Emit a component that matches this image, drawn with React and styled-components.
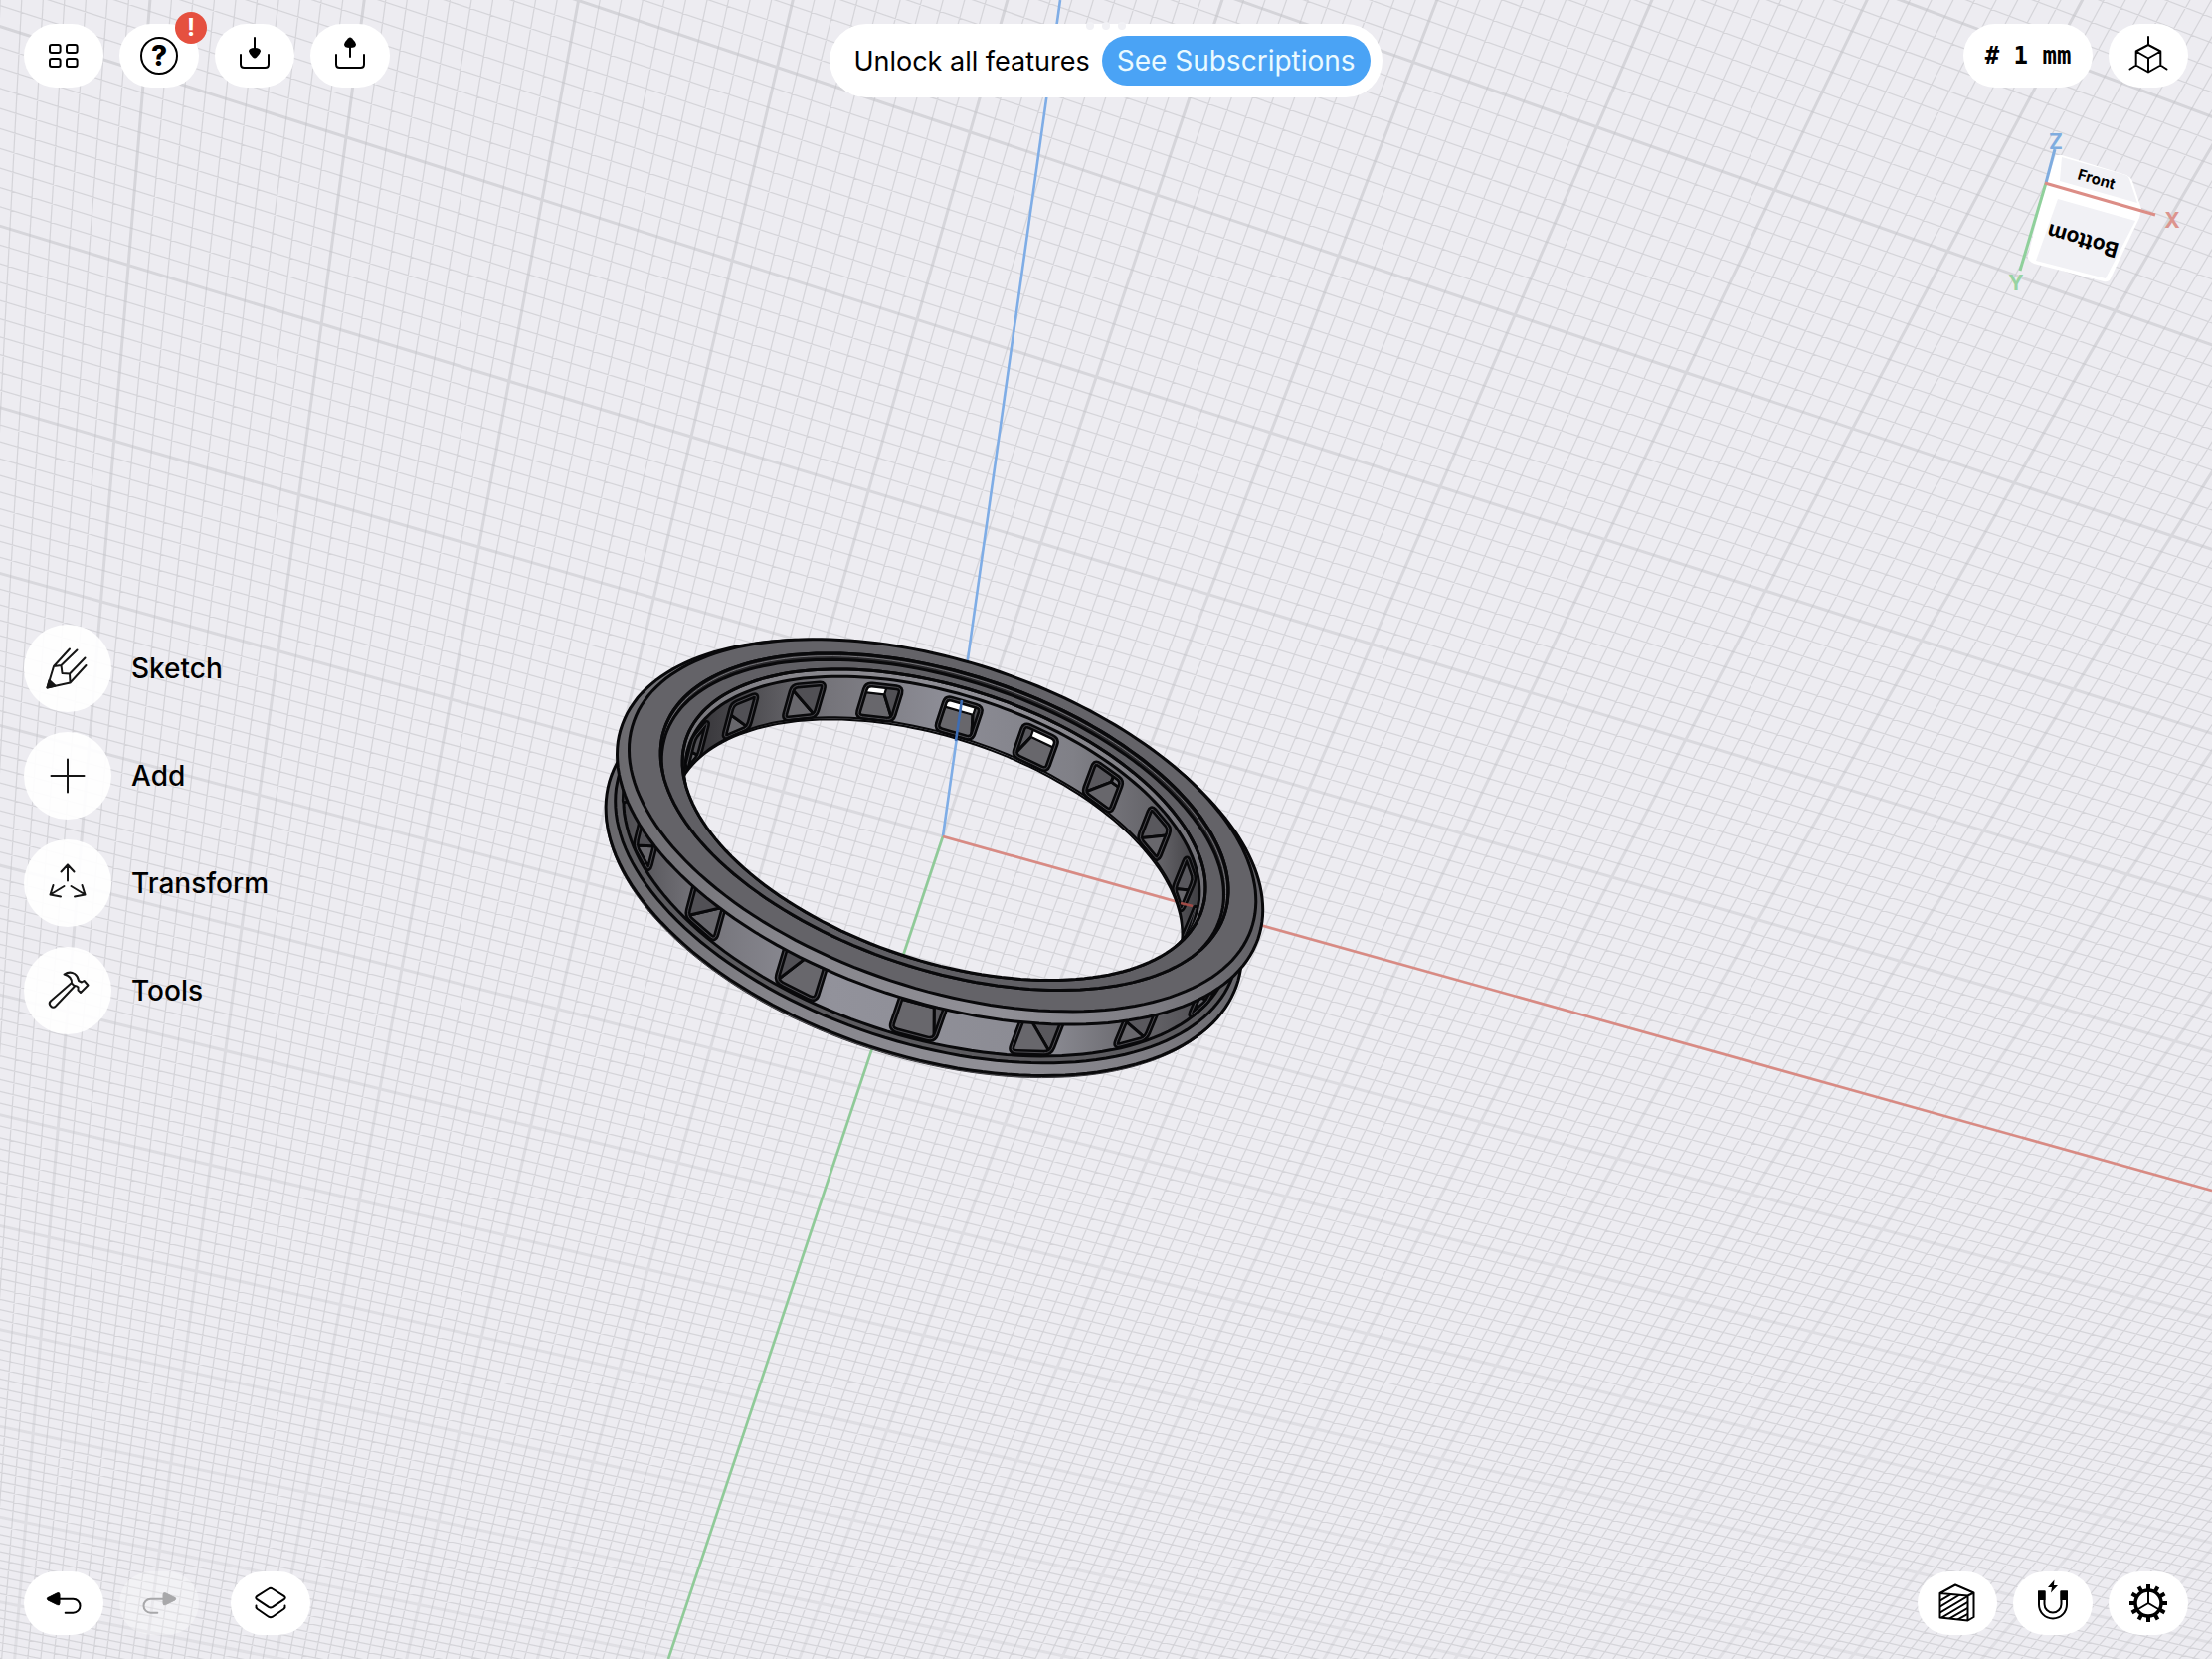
import { useId } from "react";
import styled, { createGlobalStyle } from "styled-components";

/* ---------- camera ---------- */

const SCENE_WIDTH = 2224;
const SCENE_HEIGHT = 1668;

// Projects a point of the model space (1 unit = one major grid cell).
const project = (x, y, z) => {
  const w = 1 + 0.01258 * x + 0.03955 * y + 0.0695 * z;
  return [
    (948 + 170.57 * x - 7.83 * y + 77.84 * z) / w,
    (841 + 54.85 * x + 169 * y - 26.27 * z) / w,
  ];
};

const toPath = (points, close = true) =>
  "M" +
  points.map(([x, y]) => `${x.toFixed(1)} ${y.toFixed(1)}`).join("L") +
  (close ? "Z" : "");

const mix = ([ax, ay], [bx, by], t) => [ax + (bx - ax) * t, ay + (by - ay) * t];

// Closed path whose corners are cut by a share t of each side.
const toRoundedPath = (points, t = 0.16) => {
  const fmt = ([x, y]) => `${x.toFixed(1)} ${y.toFixed(1)}`;
  const parts = points.map((p, i) => {
    const prev = points[(i + points.length - 1) % points.length];
    const next = points[(i + 1) % points.length];
    return `${i ? "L" : "M"}${fmt(mix(p, prev, t))}Q${fmt(p)} ${fmt(mix(p, next, t))}`;
  });
  return parts.join("") + "Z";
};

/* ---------- grid ---------- */

const GRID = { minX: -7, maxX: 13, minY: -8, maxY: 13 };

const gridPath = (major) => {
  let d = "";
  for (let i = GRID.minX * 10; i <= GRID.maxX * 10; i++) {
    if ((i % 10 === 0) === major) {
      d += toPath(
        [project(i / 10, GRID.minY, 0), project(i / 10, GRID.maxY, 0)],
        false
      );
    }
  }
  for (let i = GRID.minY * 10; i <= GRID.maxY * 10; i++) {
    if ((i % 10 === 0) === major) {
      d += toPath(
        [project(GRID.minX, i / 10, 0), project(GRID.maxX, i / 10, 0)],
        false
      );
    }
  }
  return d;
};

const MINOR_GRID = gridPath(false);
const MAJOR_GRID = gridPath(true);

/* ---------- ring model ---------- */

const circle = (r, y) => {
  const points = [];
  for (let i = 0; i < 180; i++) {
    const a = (i * Math.PI) / 90;
    points.push(project(r * Math.cos(a), y, r * Math.sin(a)));
  }
  return toPath(points);
};

const INNER_R = 1.605;
const OUTER_R = 1.91;

const LIP = circle(1.63, -0.19);
const FACE_EDGE = circle(1.765, -0.23);
const FRONT_HOLE = circle(INNER_R, -0.15);
const BACK_HOLE = circle(INNER_R, 0.19);

const windowQuad = (r, angle, half, y0, y1) => {
  const at = (offset, y) => {
    const a = (angle * Math.PI) / 180 + offset / r;
    return project(r * Math.cos(a), y, r * Math.sin(a));
  };
  return [at(-half, y0), at(half, y0), at(half, y1), at(-half, y1)];
};

const WINDOW_ANGLES = Array.from({ length: 18 }, (_, i) => 10 + i * 20);
const OPEN_WINDOWS = [70, 90, 110];

function RingWindow({ angle, inside }) {
  const clip = useId();
  const open = inside && OPEN_WINDOWS.includes(angle);
  const near = inside
    ? windowQuad(INNER_R, angle, 0.125, -0.1, 0.15)
    : windowQuad(OUTER_R, angle, 0.12, -0.16, 0.09);
  const far = inside
    ? windowQuad(open ? 1.81 : 1.86, angle, 0.1, -0.1, open ? 0.075 : 0.11)
    : windowQuad(INNER_R, angle, 0.1, -0.14, 0.1);
  const shades = ["#3f3e42", "#59585d", "#68676c", "#515055"];
  const outline = toRoundedPath(near);

  return (
    <g strokeLinejoin="round">
      <clipPath id={clip}>
        <path d={outline} />
      </clipPath>
      <g clipPath={`url(#${clip})`}>
        <path d={outline} fill="#59585d" />
        {near.map((p, i) => {
          const next = (i + 1) % 4;
          return (
            <path
              key={i}
              d={toPath([p, near[next], far[next], far[i]])}
              fill={shades[i]}
              strokeWidth="3"
            />
          );
        })}
        <path
          d={toPath(far)}
          fill={open ? "#fff" : "#737278"}
          strokeWidth={open ? 1.5 : 3}
        />
      </g>
      <path d={outline} fill="none" strokeWidth="6" />
      <path d={outline} fill="none" stroke="#4c4b50" strokeWidth="1" />
    </g>
  );
}

function Ring() {
  return (
    <g stroke="#09090b" strokeWidth="3" fill="none">
      <defs>
        <clipPath id="lip">
          <path d={LIP} />
        </clipPath>
        <clipPath id="front-hole" clipPath="url(#lip)">
          <path d={FRONT_HOLE} />
        </clipPath>
        <clipPath id="recess">
          <path d={FACE_EDGE} />
        </clipPath>
        <mask id="opening" maskUnits="userSpaceOnUse" x="560" y="600" width="760" height="520">
          <rect x="560" y="600" width="760" height="520" fill="#fff" stroke="none" />
          <path d={BACK_HOLE} fill="#000" stroke="none" clipPath="url(#front-hole)" />
        </mask>
        <linearGradient id="rim" gradientUnits="userSpaceOnUse" x1="606" y1="0" x2="1270" y2="0">
          <stop offset="0" stopColor="#68676b" />
          <stop offset="0.25" stopColor="#85848a" />
          <stop offset="0.6" stopColor="#919097" />
          <stop offset="0.85" stopColor="#7c7b81" />
          <stop offset="1" stopColor="#616065" />
        </linearGradient>
        <linearGradient id="channel" gradientUnits="userSpaceOnUse" x1="620" y1="0" x2="1240" y2="0">
          <stop offset="0" stopColor="#4a494d" />
          <stop offset="0.12" stopColor="#717076" />
          <stop offset="0.35" stopColor="#92929b" />
          <stop offset="0.7" stopColor="#8b8b93" />
          <stop offset="0.85" stopColor="#66656a" />
          <stop offset="1" stopColor="#454448" />
        </linearGradient>
        <linearGradient id="bore" gradientUnits="userSpaceOnUse" x1="686" y1="0" x2="1210" y2="0">
          <stop offset="0" stopColor="#302f33" />
          <stop offset="0.12" stopColor="#4b4a4e" />
          <stop offset="0.28" stopColor="#75747a" />
          <stop offset="0.5" stopColor="#8d8d96" />
          <stop offset="0.75" stopColor="#808087" />
          <stop offset="0.92" stopColor="#626166" />
          <stop offset="1" stopColor="#3b3a3e" />
        </linearGradient>
      </defs>
      <g mask="url(#opening)">
        {/* back flange */}
        <path d={circle(2, 0.185)} fill="#5f5e62" stroke="#3a393d" strokeWidth="1" />
        <path d={circle(2, 0.17)} fill="url(#rim)" />
        <path d={circle(1.955, 0.12)} fill="#5c5b5f" />
        {/* channel between the flanges */}
        <path d={circle(OUTER_R, 0.11)} fill="url(#channel)" />
        <path d={circle(OUTER_R, 0)} fill="url(#channel)" stroke="none" />
        {WINDOW_ANGLES.filter((a) => a > 180).map((a) => (
          <RingWindow key={a} angle={a} />
        ))}
        {/* front flange */}
        <path d={circle(2.005, -0.19)} fill="url(#rim)" />
        <path d={circle(1.945, -0.23)} fill="#646368" />
        <path d={FACE_EDGE} fill="#29282b" />
        <g clipPath="url(#recess)">
          <path d={circle(1.755, -0.215)} stroke="#77767b" strokeWidth="1" />
          <path d={circle(1.75, -0.19)} fill="#605f64" />
        </g>
        <path d={FACE_EDGE} />
        <path d={LIP} fill="url(#rim)" />
        {/* inner wall */}
        <g clipPath="url(#lip)">
          <path d={FRONT_HOLE} fill="url(#bore)" />
        </g>
        <g clipPath="url(#front-hole)">
          {WINDOW_ANGLES.map((a) => (
            <RingWindow key={a} angle={a} inside />
          ))}
          <path d={circle(INNER_R, 0.165)} strokeWidth="2" />
          <path d={BACK_HOLE} strokeWidth="4" />
        </g>
      </g>
      <path d={LIP} />
    </g>
  );
}

function Viewport() {
  return (
    <Scene
      viewBox={`0 0 ${SCENE_WIDTH} ${SCENE_HEIGHT}`}
      preserveAspectRatio="xMidYMid slice"
      role="img"
      aria-label="Ring model"
    >
      <defs>
        <linearGradient id="major" gradientUnits="userSpaceOnUse" x1="0" y1="0" x2="0" y2={SCENE_HEIGHT}>
          <stop offset="0" stopColor="#c4c4c9" stopOpacity="0.6" />
          <stop offset="1" stopColor="#c4c4c9" stopOpacity="0.32" />
        </linearGradient>
      </defs>
      <path d={MINOR_GRID} stroke="#c6c6cb" strokeWidth="1.2" strokeOpacity="0.64" />
      <path d={MAJOR_GRID} stroke="url(#major)" strokeWidth="3" />
      <g strokeWidth="2.6">
        <path d="M948 841L1066 0" stroke="#7fade6" />
        <path d="M948 841L672 1668" stroke="#8fcb98" />
        <path d="M948 841L2224 1197" stroke="#d98a83" />
      </g>
      <Ring />
      <g strokeWidth="2.6">
        <path d="M961 745L967 704" stroke="#3d6db5" />
        <path d="M1187 908L1199 911" stroke="#a14c48" />
      </g>
    </Scene>
  );
}

/* ---------- view cube ---------- */

function ViewCube() {
  return (
    <CubeSvg viewBox="2010 120 190 180" role="img" aria-label="Orientation cube">
      <path d="M2057 184L2067 156H2073L2138 176Q2142 178 2144 182L2153 210L2151 219L2122 280Q2120 284 2115 283L2045 265Q2038 262 2039 257Z" fill="#fff" />
      <path d="M2073 158L2137 176Q2140 177 2141 180L2149 204L2071 182Z" fill="#f1f1f5" />
      <path d="M2069 200L2147 222L2117 280L2047 262Z" fill="#f1f1f5" />
      <g strokeWidth="3">
        <path d="M2057 184L2066 150" stroke="#7facdf" />
        <path d="M2057 184L2031 272" stroke="#8fd09b" />
        <path d="M2056 184L2167 216" stroke="#dc8d86" />
      </g>
      <CubeLabel fontSize="15" transform="translate(2108 180) rotate(16)">Front</CubeLabel>
      <CubeLabel fontSize="21" transform="translate(2094 242) rotate(196)">Bottom</CubeLabel>
      <AxisLabel x="2067" y="142" fill="#7facdf">Z</AxisLabel>
      <AxisLabel x="2184" y="221" fill="#dc948e">X</AxisLabel>
      <AxisLabel x="2027" y="284" fill="#98d3a2">Y</AxisLabel>
    </CubeSvg>
  );
}

/* ---------- icons ---------- */

const GridIcon = () => (
  <Icon viewBox="0 0 40 40">
    <rect x="6" y="9" width="10.6" height="8" rx="2" />
    <rect x="23" y="9" width="10.6" height="8" rx="2" />
    <rect x="6" y="23" width="10.6" height="8" rx="2" />
    <rect x="23" y="23" width="10.6" height="8" rx="2" />
  </Icon>
);

const HelpIcon = () => (
  <Icon viewBox="0 0 40 40">
    <circle cx="20" cy="20" r="18" />
    <HelpMark x="20" y="30">?</HelpMark>
  </Icon>
);

const TRAY = "M6 19v9.5q0 3.5 3.5 3.5h21q3.5 0 3.5-3.5V19";

const ImportIcon = () => (
  <Icon viewBox="0 0 40 40">
    <path d={TRAY} />
    <path d="M20 2v12" />
    <path d="M14 15.5Q14 12 20 12T26 15.5Q25.5 18 22 21.5Q20 23.5 18 21.5Q14.5 18 14 15.5Z" fill="currentColor" stroke="none" />
  </Icon>
);

const ExportIcon = () => (
  <Icon viewBox="0 0 40 40">
    <path d={TRAY} />
    <path d="M20 21V10" />
    <path d="M14 8.5Q14 12 20 12T26 8.5Q25.5 6 22 2.5Q20 .5 18 2.5Q14.5 6 14 8.5Z" fill="currentColor" stroke="none" />
  </Icon>
);

const AxesCubeIcon = () => (
  <Icon viewBox="0 0 40 40">
    <path d="M20 9L32.3 15.5V29.5L20 36.5L7.7 29.5V15.5ZM7.7 15.5L20 22.5L32.3 15.5M20 22.5V36.5M20 9V1M7.7 29.5L1.5 33.5M32.3 29.5L38.5 33.5" />
  </Icon>
);

const UndoIcon = () => (
  <Icon viewBox="0 0 40 40">
    <path d="M16 15.7H29.5a7 7 0 0 1 0 14H21.7" />
    <path d="M4 14.6L13.5 9.8Q16 8.8 16 11.5V20Q16 22.7 13.5 21.6L4 16.9Q2.5 15.7 4 14.6Z" fill="currentColor" strokeWidth="1" />
  </Icon>
);

const RedoIcon = () => (
  <Icon viewBox="0 0 40 40">
    <path d="M24 15.7H11.5a7 7 0 0 0 0 14H18.3" />
    <path d="M36 14.6L26.5 9.8Q24 8.8 24 11.5V20Q24 22.7 26.5 21.6L36 16.9Q37.5 15.7 36 14.6Z" fill="currentColor" strokeWidth="1" />
  </Icon>
);

const LayersIcon = () => (
  <Icon viewBox="0 0 40 40">
    <path d="M18 5.5Q20 4 22 5.5L34 13.2Q35.5 14.5 34 15.8L22 23.8Q20 25 18 23.8L6 15.8Q4.5 14.5 6 13.2Z" />
    <path d="M5.5 22.5Q5 24.5 6.5 25.7L18 33.7Q20 35 22 33.7L33.5 25.7Q35 24.5 34.5 22.5" />
  </Icon>
);

const SectionIcon = () => (
  <Icon viewBox="0 0 40 40">
    <clipPath id="section-face">
      <path d="M2.5 10L30.5 12.5V37.5L2.5 34.5Z" />
    </clipPath>
    <path d="M2.5 10L30.5 12.5V37.5L2.5 34.5ZM2.5 10L18 1.5L36.5 9.5L30.5 12.5M36.5 9.5V34L30.5 37.5" />
    <path
      clipPath="url(#section-face)"
      d="M0 19L17 9M0 25L25 10M0 31L32 12M0 37L32 18M6 39L32 24M14 40L32 30"
    />
  </Icon>
);

const MagnetIcon = () => (
  <Icon viewBox="0 0 40 40">
    <path d="M6 8.5H11.5V21a8.5 8.5 0 0 0 17 0V8.5H34V21.5a14 14 0 0 1-28 0Z" />
    <path d="M5 7.5H12.5V17H5ZM27.5 7.5H35V17H27.5ZM21.5-3.5L15 4H19L18 9.5L25 2H21Z" fill="currentColor" stroke="none" />
  </Icon>
);

const GearIcon = () => (
  <Icon viewBox="0 0 40 40">
    <circle cx="20" cy="20" r="13" strokeWidth="3.5" />
    <path d="M20 20V7M20 20L9 26.5M20 20L31 26.5" />
    {Array.from({ length: 12 }, (_, i) => (
      <path key={i} d="M20 6V1" strokeWidth="4" strokeLinecap="butt" transform={`rotate(${i * 30} 20 20)`} />
    ))}
  </Icon>
);

const PencilIcon = () => (
  <ToolIcon viewBox="0 0 48 48">
    <path d="M3.5 43.5L10 22L17.5 21L18.5 29L26 29.5L26.5 38.5ZM10 22L26 4.5M17.5 21L33.5 5.5M26 29.5L41.5 13.5M26.5 38.5L42.5 21" />
    <path d="M3.5 43.5L5.5 36L11.5 41.5Z" fill="currentColor" />
  </ToolIcon>
);

const PlusIcon = () => (
  <ToolIcon viewBox="0 0 48 48">
    <path d="M24 7.5V40.5M7.5 24H40.5" />
  </ToolIcon>
);

const TransformIcon = () => (
  <ToolIcon viewBox="0 0 48 48">
    <path d="M24 21.5V5.5M17.5 12.5L24 5.5L30.5 12.5M20.5 27L6.5 35.5M9.5 26L6.5 35.5L17 37.5M27.5 27L41.5 35.5M38.5 26L41.5 35.5L31 37.5" />
  </ToolIcon>
);

const HammerIcon = () => (
  <ToolIcon viewBox="0 0 48 48">
    <path d="M20.5 7.5Q26 4 31 7Q34.5 9.5 35 14L38 15.5L40.5 14L44.5 18.5L37 26L34.5 23.5V20.5Q32.5 18.5 30.5 19L28 16.5Q28.5 9.5 20.5 7.5Z" />
    <path d="M27.5 16.5L6.8 34.5Q4.5 37 7 39.5T12 39.5L31 19.5" />
  </ToolIcon>
);

const TOOLS = [
  { label: "Sketch", icon: <PencilIcon /> },
  { label: "Add", icon: <PlusIcon /> },
  { label: "Transform", icon: <TransformIcon /> },
  { label: "Tools", icon: <HammerIcon /> },
];

/* ---------- page ---------- */

export default function App() {
  return (
    <Screen>
      <GlobalStyle />
      <Viewport />
      <Overlay>
        <Header>
          <ButtonRow>
            <PillButton aria-label="Designs">
              <GridIcon />
            </PillButton>
            <PillButton aria-label="Help">
              <HelpIcon />
              <Badge>!</Badge>
            </PillButton>
            <PillButton aria-label="Import">
              <ImportIcon />
            </PillButton>
            <PillButton aria-label="Export">
              <ExportIcon />
            </PillButton>
          </ButtonRow>
          <Banner>
            <Dots aria-hidden="true">
              <Dot />
              <Dot />
              <Dot />
            </Dots>
            <span>Unlock all features</span>
            <SubscribeButton>See Subscriptions</SubscribeButton>
          </Banner>
          <ButtonRow $end>
            <UnitButton># 1 mm</UnitButton>
            <PillButton aria-label="Views">
              <AxesCubeIcon />
            </PillButton>
          </ButtonRow>
        </Header>
        <Middle>
          <ToolList>
            {TOOLS.map(({ label, icon }) => (
              <ToolButton key={label}>
                <ToolCircle>{icon}</ToolCircle>
                {label}
              </ToolButton>
            ))}
          </ToolList>
          <ViewCube />
        </Middle>
        <Footer>
          <FooterGroup>
            <ButtonRow>
              <PillButton aria-label="Undo">
                <UndoIcon />
              </PillButton>
              <PillButton aria-label="Redo" disabled>
                <RedoIcon />
              </PillButton>
            </ButtonRow>
            <PillButton aria-label="Items">
              <LayersIcon />
            </PillButton>
          </FooterGroup>
          <ButtonRow $end>
            <PillButton aria-label="Section view">
              <SectionIcon />
            </PillButton>
            <PillButton aria-label="Snapping">
              <MagnetIcon />
            </PillButton>
            <PillButton aria-label="Settings">
              <GearIcon />
            </PillButton>
          </ButtonRow>
        </Footer>
      </Overlay>
    </Screen>
  );
}

const GlobalStyle = createGlobalStyle`
  * {
    box-sizing: border-box;
  }
  body {
    margin: 0;
    font-family: Inter, "Liberation Sans", sans-serif;
    color: #000;
  }
  button {
    border: 0;
    padding: 0;
    font: inherit;
    color: inherit;
    cursor: pointer;
  }
`;

const Screen = styled.div`
  position: relative;
  height: 100vh;
  overflow: hidden;
  background: #edecf1;
`;

const Scene = styled.svg`
  position: absolute;
  inset: 0;
  width: 100%;
  height: 100%;
`;

const Overlay = styled.div`
  position: relative;
  height: 100%;
  padding: 24px;
  display: grid;
  grid-template-rows: 64px 1fr 64px;
`;

const Header = styled.header`
  display: grid;
  grid-template-columns: 1fr auto 1fr;
  align-items: start;
`;

const Middle = styled.main`
  display: flex;
  justify-content: space-between;
`;

const Footer = styled.footer`
  display: flex;
  justify-content: space-between;
`;

const FooterGroup = styled.div`
  display: flex;
  gap: 32px;
`;

const ButtonRow = styled.div`
  display: flex;
  gap: 16px;
  justify-content: ${({ $end }) => ($end ? "flex-end" : "flex-start")};
`;

const PillButton = styled.button`
  position: relative;
  width: 80px;
  height: 64px;
  display: flex;
  justify-content: center;
  align-items: center;
  border-radius: 32px;
  background: #fff;

  &:disabled {
    background: rgba(255, 255, 255, 0.3);
    color: #a8a8aa;
  }
`;

const UnitButton = styled(PillButton)`
  && {
    width: 130px;
    font-family: "DejaVu Sans Mono", "Liberation Mono", monospace;
    font-size: 24px;
    font-weight: 700;
    white-space: pre;
  }
`;

const Icon = styled.svg`
  width: 40px;
  height: 40px;
  overflow: visible;
  fill: none;
  stroke: currentColor;
  stroke-width: 2;
  stroke-linecap: round;
  stroke-linejoin: round;
`;

const ToolIcon = styled(Icon)`
  width: 48px;
  height: 48px;
  color: #151515;
`;

const HelpMark = styled.text`
  font-size: 28px;
  font-weight: 800;
  text-anchor: middle;
  fill: currentColor;
  stroke: none;
`;

const Badge = styled.span`
  position: absolute;
  top: -12px;
  right: -8px;
  width: 32px;
  height: 32px;
  border-radius: 50%;
  background: #e5503f;
  color: #fff;
  font-size: 24px;
  font-weight: 700;
  line-height: 32px;
  text-align: center;
`;

const Banner = styled.div`
  position: relative;
  height: 74px;
  padding: 0 12px 0 24px;
  display: flex;
  align-items: center;
  gap: 12px;
  border-radius: 37px;
  background: #fff;
  font-size: 27px;
  white-space: nowrap;
`;

const Dots = styled.div`
  position: absolute;
  top: -2px;
  left: 0;
  right: 0;
  display: flex;
  justify-content: center;
  gap: 8px;
`;

const Dot = styled.i`
  width: 8px;
  height: 8px;
  border-radius: 50%;
  background: #f1f1f5;
`;

const SubscribeButton = styled.button`
  && {
    height: 50px;
    padding: 0 15px;
    border-radius: 25px;
    background: #4aa3f5;
    color: #eafaff;
    font-size: 28px;
  }
`;

const ToolList = styled.nav`
  display: flex;
  flex-direction: column;
  justify-content: center;
  gap: 20px;
`;

const ToolButton = styled.button`
  && {
    display: flex;
    align-items: center;
    gap: 20px;
    background: none;
    font-size: 28px;
    font-weight: 500;
  }
`;

const ToolCircle = styled.span`
  width: 88px;
  height: 88px;
  display: flex;
  justify-content: center;
  align-items: center;
  border-radius: 50%;
  background: rgba(255, 255, 255, 0.92);
`;

const CubeSvg = styled.svg`
  width: 190px;
  height: 180px;
  margin-top: 32px;
  overflow: visible;
`;

const CubeLabel = styled.text`
  font-weight: 700;
  text-anchor: middle;
  dominant-baseline: central;
`;

const AxisLabel = styled.text`
  font-size: 21px;
  font-weight: 700;
  text-anchor: middle;
  dominant-baseline: central;
`;
